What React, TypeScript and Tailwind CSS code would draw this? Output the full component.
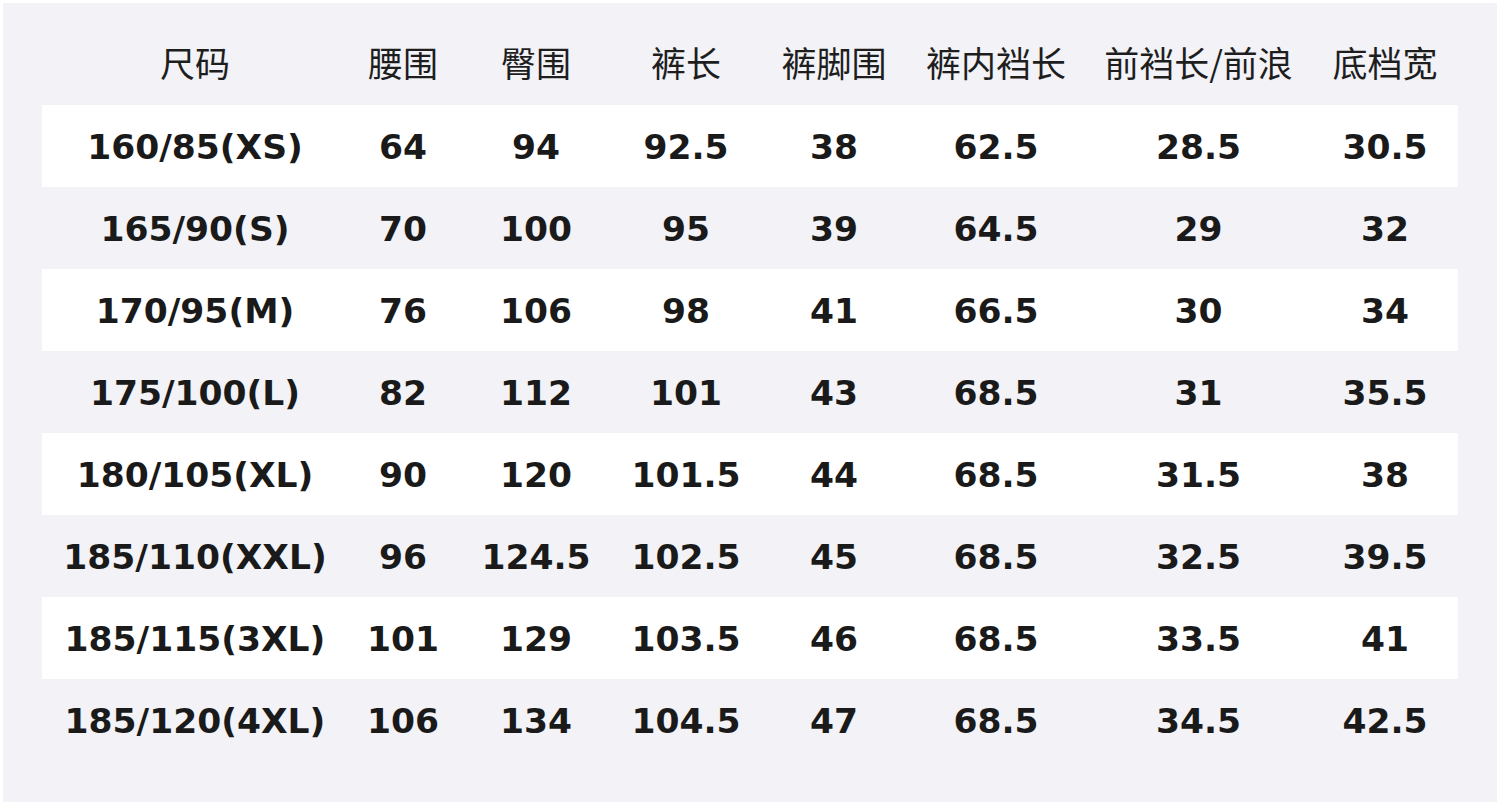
const headers = ["尺码", "腰围", "臀围", "裤长", "裤脚围", "裤内裆长", "前裆长/前浪", "底档宽"];

const rows = [
  ["160/85(XS)", "64", "94", "92.5", "38", "62.5", "28.5", "30.5"],
  ["165/90(S)", "70", "100", "95", "39", "64.5", "29", "32"],
  ["170/95(M)", "76", "106", "98", "41", "66.5", "30", "34"],
  ["175/100(L)", "82", "112", "101", "43", "68.5", "31", "35.5"],
  ["180/105(XL)", "90", "120", "101.5", "44", "68.5", "31.5", "38"],
  ["185/110(XXL)", "96", "124.5", "102.5", "45", "68.5", "32.5", "39.5"],
  ["185/115(3XL)", "101", "129", "103.5", "46", "68.5", "33.5", "41"],
  ["185/120(4XL)", "106", "134", "104.5", "47", "68.5", "34.5", "42.5"],
];

const cols = "grid grid-cols-[306px_110px_156px_144px_152px_172px_233px_143px]";

export default function App() {
  return (
    <div className="w-[1500px] h-[805px] bg-white p-[3px] overflow-hidden">
      <div className="h-full bg-[#f2f2f7] pl-[39px] pr-[39px] pt-[20px]">
        {/* header */}
        <div className={`${cols} h-[82px] items-center pb-[6px] text-[35px] text-[#1e1e1e] font-['Noto_Sans_CJK_SC',sans-serif]`}>
          {headers.map((h, j) => (
            <div key={h} className={`text-center whitespace-nowrap leading-none ${j === 7 ? "pr-[3px]" : ""}`}>
              {h}
            </div>
          ))}
        </div>
        {/* body */}
        {rows.map((r, i) => (
          <div
            key={i}
            className={`${cols} h-[82px] items-center pt-[2px] text-[34.5px] font-bold text-[#1a1a1a] font-['DejaVu_Sans',sans-serif] ${
              i % 2 === 0 ? "bg-white" : ""
            }`}
          >
            {r.map((c, j) => (
              <div key={j} className={`text-center whitespace-nowrap leading-none ${j === 7 ? "pr-[3px]" : ""}`}>
                {c}
              </div>
            ))}
          </div>
        ))}
      </div>
    </div>
  );
}
